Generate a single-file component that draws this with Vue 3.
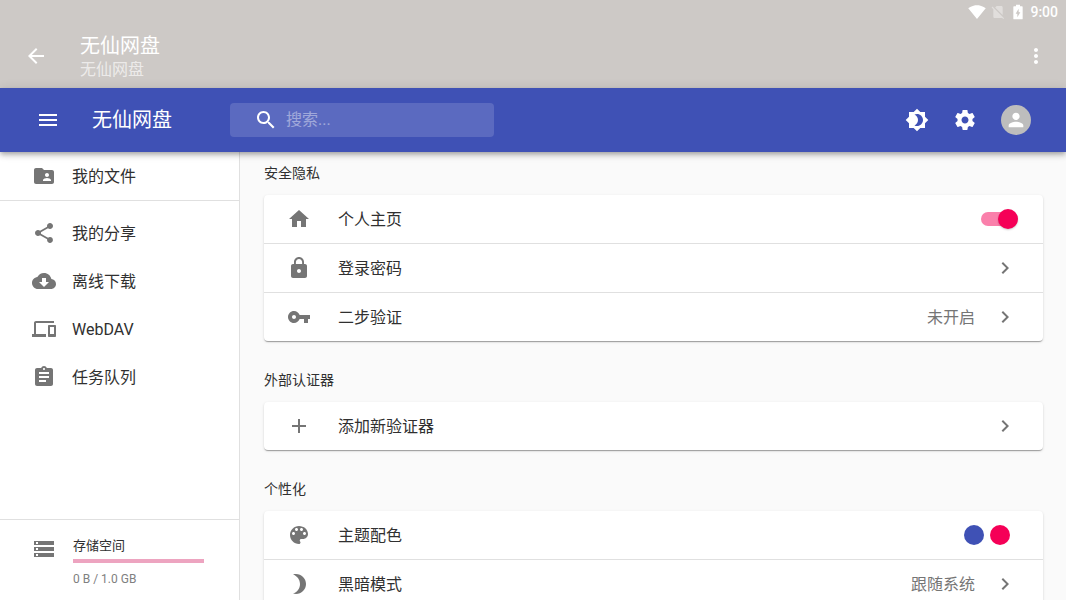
<script setup>
import { ref } from 'vue'

const query = ref('')
const homepage = ref(true)

const icons = {
  folder: 'M20 6h-8l-2-2H4c-1.1 0-1.99.9-1.99 2L2 18c0 1.1.9 2 2 2h16c1.1 0 2-.9 2-2V8c0-1.1-.9-2-2-2zm-5 3c1.1 0 2 .9 2 2s-.9 2-2 2-2-.9-2-2 .9-2 2-2zm4 8h-8v-1c0-1.33 2.67-2 4-2s4 .67 4 2v1z',
  share: 'M18 16.08c-.76 0-1.44.3-1.96.77L8.91 12.7c.05-.23.09-.46.09-.7s-.04-.47-.09-.7l7.05-4.11c.54.5 1.25.81 2.04.81 1.66 0 3-1.34 3-3s-1.34-3-3-3-3 1.34-3 3c0 .24.04.47.09.7L8.04 9.81C7.5 9.31 6.79 9 6 9c-1.66 0-3 1.34-3 3s1.34 3 3 3c.79 0 1.5-.31 2.04-.81l7.12 4.16c-.05.21-.08.43-.08.65 0 1.61 1.31 2.92 2.92 2.92s2.92-1.31 2.92-2.92-1.31-2.92-2.92-2.92z',
  cloud: 'M19.35 10.04C18.67 6.59 15.64 4 12 4 9.11 4 6.6 5.64 5.35 8.04 2.34 8.36 0 10.91 0 14c0 3.31 2.69 6 6 6h13c2.76 0 5-2.24 5-5 0-2.64-2.05-4.78-4.65-4.96zM17 13l-5 5-5-5h3V9h4v4h3z',
  devices: 'M4 6h18V4H4c-1.1 0-2 .9-2 2v11H0v3h14v-3H4V6zm19 2h-6c-.55 0-1 .45-1 1v10c0 .55.45 1 1 1h6c.55 0 1-.45 1-1V9c0-.55-.45-1-1-1zm-1 9h-4v-7h4v7z',
  tasks: 'M19 3h-4.18C14.4 1.84 13.3 1 12 1c-1.3 0-2.4.84-2.82 2H5c-1.1 0-2 .9-2 2v14c0 1.1.9 2 2 2h14c1.1 0 2-.9 2-2V5c0-1.1-.9-2-2-2zm-7 0c.55 0 1 .45 1 1s-.45 1-1 1-1-.45-1-1 .45-1 1-1zm2 14H7v-2h7v2zm3-4H7v-2h10v2zm0-4H7V7h10v2z',
  storage: 'M2 20h20v-4H2v4zm2-3h2v2H4v-2zM2 4v4h20V4H2zm4 3H4V5h2v2zm-4 7h20v-4H2v4zm2-3h2v2H4v-2z',
  home: 'M10 20v-6h4v6h5v-8h3L12 3 2 12h3v8z',
  lock: 'M18 8h-1V6c0-2.76-2.24-5-5-5S7 3.24 7 6v2H6c-1.1 0-2 .9-2 2v10c0 1.1.9 2 2 2h12c1.1 0 2-.9 2-2V10c0-1.1-.9-2-2-2zm-6 9c-1.1 0-2-.9-2-2s.9-2 2-2 2 .9 2 2-.9 2-2 2zm3.1-9H8.9V6c0-1.71 1.39-3.1 3.1-3.1 1.71 0 3.1 1.39 3.1 3.1v2z',
  key: 'M12.65 10C11.83 7.67 9.61 6 7 6c-3.31 0-6 2.69-6 6s2.69 6 6 6c2.61 0 4.83-1.67 5.65-4H17v4h4v-4h2v-4H12.65zM7 14c-1.1 0-2-.9-2-2s.9-2 2-2 2 .9 2 2-.9 2-2 2z',
  add: 'M19 13h-6v6h-2v-6H5v-2h6V5h2v6h6v2z',
  palette: 'M12 3c-4.97 0-9 4.03-9 9s4.03 9 9 9c.83 0 1.5-.67 1.5-1.5 0-.39-.15-.74-.39-1.01-.23-.26-.38-.61-.38-.99 0-.83.67-1.5 1.5-1.5H16c2.76 0 5-2.24 5-5 0-4.42-4.03-8-9-8zm-5.5 9c-.83 0-1.5-.67-1.5-1.5S5.67 9 6.5 9 8 9.67 8 10.5 7.33 12 6.5 12zm3-4C8.67 8 8 7.33 8 6.5S8.67 5 9.5 5s1.5.67 1.5 1.5S10.33 8 9.5 8zm5 0c-.83 0-1.5-.67-1.5-1.5S13.67 5 14.5 5s1.5.67 1.5 1.5S15.33 8 14.5 8zm3 4c-.83 0-1.5-.67-1.5-1.5S16.67 9 17.5 9s1.5.67 1.5 1.5-.67 1.5-1.5 1.5z',
  moon: 'M9 2c-1.05 0-2.05.16-3 .46 4.06 1.27 7 5.06 7 9.54 0 4.48-2.94 8.27-7 9.54.95.3 1.95.46 3 .46 5.52 0 10-4.48 10-10S14.52 2 9 2z',
  chevron: 'M10 6L8.59 7.41 13.17 12l-4.58 4.59L10 18l6-6z',
  back: 'M20 11H7.83l5.59-5.59L12 4l-8 8 8 8 1.41-1.41L7.83 13H20v-2z',
  more: 'M12 8c1.1 0 2-.9 2-2s-.9-2-2-2-2 .9-2 2 .9 2 2 2zm0 2c-1.1 0-2 .9-2 2s.9 2 2 2 2-.9 2-2-.9-2-2-2zm0 6c-1.1 0-2 .9-2 2s.9 2 2 2 2-.9 2-2-.9-2-2-2z',
  menu: 'M3 18h18v-2H3v2zm0-5h18v-2H3v2zm0-7v2h18V6H3z',
  search: 'M15.5 14h-.79l-.28-.27C15.41 12.59 16 11.11 16 9.5 16 5.91 13.09 3 9.5 3S3 5.91 3 9.5 5.91 16 9.5 16c1.61 0 3.09-.59 4.23-1.57l.27.28v.79l5 4.99L20.49 19l-4.99-5zm-6 0C7.01 14 5 11.99 5 9.5S7.01 5 9.5 5 14 7.01 14 9.5 11.99 14 9.5 14z',
  brightness: 'M20 8.69V4h-4.69L12 .69 8.69 4H4v4.69L.69 12 4 15.31V20h4.69L12 23.31 15.31 20H20v-4.69L23.31 12 20 8.69zM12 18c-.89 0-1.74-.2-2.5-.55C11.56 16.5 13 14.42 13 12s-1.44-4.5-3.5-5.45C10.26 6.2 11.11 6 12 6c3.31 0 6 2.69 6 6s-2.69 6-6 6z',
  settings: 'M19.43 12.98c.04-.32.07-.64.07-.98s-.03-.66-.07-.98l2.11-1.65c.19-.15.24-.42.12-.64l-2-3.46c-.12-.22-.39-.3-.61-.22l-2.49 1c-.52-.4-1.08-.73-1.69-.98l-.38-2.65C14.46 2.18 14.25 2 14 2h-4c-.25 0-.46.18-.49.42l-.38 2.65c-.61.25-1.17.59-1.69.98l-2.49-1c-.23-.09-.49 0-.61.22l-2 3.46c-.13.22-.07.49.12.64l2.11 1.65c-.04.32-.07.65-.07.98s.03.66.07.98l-2.11 1.65c-.19.15-.24.42-.12.64l2 3.46c.12.22.39.3.61.22l2.49-1c.52.4 1.08.73 1.69.98l.38 2.65c.03.24.24.42.49.42h4c.25 0 .46-.18.49-.42l.38-2.65c.61-.25 1.17-.59 1.69-.98l2.49 1c.23.09.49 0 .61-.22l2-3.46c.12-.22.07-.49-.12-.64l-2.11-1.65zM12 15.5c-1.93 0-3.5-1.57-3.5-3.5s1.57-3.5 3.5-3.5 3.5 1.57 3.5 3.5-1.57 3.5-3.5 3.5z',
  person: 'M12 12c2.21 0 4-1.79 4-4s-1.79-4-4-4-4 1.79-4 4 1.79 4 4 4zm0 2c-2.67 0-8 1.34-8 4v2h16v-2c0-2.66-5.33-4-8-4z',
  wifi: 'M12.01 21.49L23.64 7c-.45-.34-4.93-4-11.64-4C5.28 3 .81 6.66.36 7l11.63 14.49.01.01.01-.01z',
  nosim: 'M18.99 5c0-1.1-.89-2-1.99-2h-7L7.66 5.34 19 16.68 18.99 5zM3.65 3.88L2.38 5.15 5 7.77V19c0 1.1.9 2 2 2h10.01c.35 0 .67-.1.96-.26l1.88 1.88 1.27-1.27L3.65 3.88z',
  battery: 'M18 3.5h-3V1H9v2.5H6c-.6 0-1 .4-1 1V22c0 .6.4 1 1 1h12c.6 0 1-.4 1-1V4.5c0-.6-.4-1-1-1zM11 20v-5.5H8.5L13 7v5.5h2.5L11 20z',
}

const nav = [
  { label: '我的分享', icon: 'share' },
  { label: '离线下载', icon: 'cloud' },
  { label: 'WebDAV', icon: 'devices' },
  { label: '任务队列', icon: 'tasks' },
]

const sections = [
  {
    title: '安全隐私',
    rows: [
      { label: '个人主页', icon: 'home', kind: 'switch' },
      { label: '登录密码', icon: 'lock' },
      { label: '二步验证', icon: 'key', value: '未开启' },
    ],
  },
  { title: '外部认证器', rows: [{ label: '添加新验证器', icon: 'add' }] },
  {
    title: '个性化',
    rows: [
      { label: '主题配色', icon: 'palette', kind: 'colors' },
      { label: '黑暗模式', icon: 'moon', value: '跟随系统' },
    ],
  },
]
</script>

<template>
  <div class="app">
    <header class="system">
      <div class="status">
        <svg class="status-icon wifi" viewBox="0 0 24 24"><path :d="icons.wifi" /></svg>
        <svg class="status-icon faint" viewBox="0 0 24 24"><path :d="icons.nosim" /></svg>
        <svg class="status-icon" viewBox="0 0 24 24"><path :d="icons.battery" /></svg>
        <time class="clock">9:00</time>
      </div>
      <div class="titlebar">
        <button class="icon-btn" type="button" aria-label="返回">
          <svg class="icon" viewBox="0 0 24 24"><path :d="icons.back" /></svg>
        </button>
        <div class="titles">
          <div class="title">无仙网盘</div>
          <div class="subtitle">无仙网盘</div>
        </div>
        <button class="icon-btn" type="button" aria-label="更多">
          <svg class="icon" viewBox="0 0 24 24"><path :d="icons.more" /></svg>
        </button>
      </div>
    </header>

    <header class="appbar">
      <button class="icon-btn" type="button" aria-label="菜单">
        <svg class="icon" viewBox="0 0 24 24"><path :d="icons.menu" /></svg>
      </button>
      <h1 class="brand">无仙网盘</h1>
      <label class="search">
        <svg class="icon" viewBox="0 0 24 24"><path :d="icons.search" /></svg>
        <input v-model="query" type="text" placeholder="搜索..." aria-label="搜索" />
      </label>
      <div class="actions">
        <button class="icon-btn" type="button" aria-label="切换主题">
          <svg class="icon" viewBox="0 0 24 24"><path :d="icons.brightness" /></svg>
        </button>
        <button class="icon-btn" type="button" aria-label="设置">
          <svg class="icon" viewBox="0 0 24 24"><path :d="icons.settings" /></svg>
        </button>
        <button class="avatar" type="button" aria-label="账户">
          <svg viewBox="0 0 24 24"><path :d="icons.person" /></svg>
        </button>
      </div>
    </header>

    <div class="body">
      <aside class="sidebar">
        <nav>
          <div class="nav-top">
            <a class="nav-item" href="#">
              <svg class="icon" viewBox="0 0 24 24"><path :d="icons.folder" /></svg>
              <span>我的文件</span>
            </a>
          </div>
          <div class="nav-list">
            <a v-for="item in nav" :key="item.label" class="nav-item" href="#">
              <svg class="icon" viewBox="0 0 24 24"><path :d="icons[item.icon]" /></svg>
              <span>{{ item.label }}</span>
            </a>
          </div>
        </nav>
        <div class="storage">
          <svg class="icon" viewBox="0 0 24 24"><path :d="icons.storage" /></svg>
          <div class="storage-info">
            <div class="storage-title">存储空间</div>
            <div class="bar" role="progressbar" aria-label="存储空间" aria-valuenow="0"></div>
            <div class="storage-text">0 B / 1.0 GB</div>
          </div>
        </div>
      </aside>

      <main class="content">
        <section v-for="section in sections" :key="section.title" class="section">
          <h2>{{ section.title }}</h2>
          <div class="card">
            <template v-for="row in section.rows" :key="row.label">
              <label v-if="row.kind === 'switch'" class="row">
                <svg class="icon" viewBox="0 0 24 24"><path :d="icons[row.icon]" /></svg>
                <span class="label">{{ row.label }}</span>
                <input v-model="homepage" class="switch" type="checkbox" role="switch" />
              </label>
              <button v-else class="row" type="button">
                <svg class="icon" viewBox="0 0 24 24"><path :d="icons[row.icon]" /></svg>
                <span class="label">{{ row.label }}</span>
                <span v-if="row.kind === 'colors'" class="swatches">
                  <i class="dot primary"></i><i class="dot secondary"></i>
                </span>
                <template v-else>
                  <span v-if="row.value" class="value">{{ row.value }}</span>
                  <svg class="icon chevron" viewBox="0 0 24 24"><path :d="icons.chevron" /></svg>
                </template>
              </button>
            </template>
          </div>
        </section>
      </main>
    </div>
  </div>
</template>

<style>
body {
  margin: 0;
  overflow: hidden;
}
</style>

<style scoped>
* {
  box-sizing: border-box;
}
.app {
  display: flex;
  flex-direction: column;
  height: 100vh;
  overflow: hidden;
  background: #fafafa;
  color: #303030;
  font: 16px/24px Roboto, "Noto Sans CJK SC", sans-serif;
}
button,
input {
  font: inherit;
  color: inherit;
}
button {
  border: 0;
  padding: 0;
  background: none;
  cursor: pointer;
}
svg {
  fill: currentColor;
}
.icon {
  display: block;
  flex: none;
  width: 24px;
  height: 24px;
}
.icon-btn {
  display: flex;
  align-items: center;
  justify-content: center;
  flex: none;
  width: 48px;
  height: 48px;
}

.system {
  flex: none;
  background: #cdc9c6;
  color: #fff;
}
.status {
  display: flex;
  align-items: center;
  justify-content: flex-end;
  gap: 4px;
  height: 24px;
  padding-right: 8px;
}
.status-icon {
  width: 16px;
  height: 16px;
}
.status-icon.wifi {
  width: 18px;
  height: 18px;
}
.faint {
  opacity: 0.4;
}
.clock {
  font-size: 14px;
  font-weight: 500;
}
.titlebar {
  display: flex;
  align-items: center;
  height: 64px;
  padding: 0 6px 0 12px;
}
.titles {
  flex: 1;
  padding: 4px 0 0 20px;
}
.title {
  font-size: 20px;
  line-height: 24px;
}
.subtitle {
  color: rgba(255, 255, 255, 0.65);
}

.appbar {
  position: relative;
  z-index: 1;
  display: flex;
  align-items: center;
  flex: none;
  height: 64px;
  padding: 0 31px 0 24px;
  background: #3f51b5;
  color: #fff;
  box-shadow: 0 2px 4px -1px rgba(0, 0, 0, 0.2), 0 4px 5px rgba(0, 0, 0, 0.14),
    0 1px 10px rgba(0, 0, 0, 0.12);
}
.brand {
  margin: 0;
  padding-left: 20px;
  width: 158px;
  font-size: 20px;
  font-weight: 400;
  line-height: 32px;
}
.search {
  display: flex;
  align-items: center;
  gap: 8px;
  width: 264px;
  height: 34px;
  padding: 0 8px 0 24px;
  border-radius: 4px;
  background: rgba(255, 255, 255, 0.15);
}
.search input {
  flex: 1;
  min-width: 0;
  padding: 0;
  border: 0;
  outline: 0;
  background: none;
}
.search input::placeholder {
  color: #fff;
  opacity: 0.42;
}
.actions {
  display: flex;
  align-items: center;
  margin-left: auto;
}
.avatar {
  display: flex;
  align-items: center;
  justify-content: center;
  width: 30px;
  height: 30px;
  margin-left: 12px;
  margin-right: 4px;
  border-radius: 50%;
  background: #bdbdbd;
}
.avatar svg {
  width: 22px;
  height: 22px;
}

.body {
  display: flex;
  flex: 1;
  min-height: 0;
}
.sidebar {
  display: flex;
  flex-direction: column;
  justify-content: space-between;
  flex: none;
  width: 240px;
  border-right: 1px solid #e0e0e0;
  background: #fff;
}
.nav-top {
  border-bottom: 1px solid #e0e0e0;
}
.nav-list {
  padding: 8px 0;
}
.nav-item {
  display: flex;
  align-items: center;
  gap: 16px;
  height: 48px;
  padding: 0 32px;
  color: inherit;
  text-decoration: none;
}
.nav-item span,
.label,
.value {
  padding-top: 2px;
}
.nav-item .icon,
.storage .icon,
.row .icon {
  color: #757575;
}
.storage {
  display: flex;
  align-items: flex-start;
  gap: 17px;
  padding: 17px 35px 12px 32px;
  border-top: 1px solid #e0e0e0;
}
.storage-info {
  flex: 1;
}
.storage-title {
  font-size: 13px;
  line-height: 18px;
}
.bar {
  height: 4px;
  margin: 4px 0 7px;
  background: #eda4c0;
}
.storage-text {
  color: #808080;
  font-size: 12px;
  line-height: 18px;
}

.content {
  flex: 1;
  min-width: 0;
  padding: 11px 23px 0 24px;
  overflow: hidden;
}
.section {
  margin-bottom: 29px;
}
h2 {
  margin: 0 0 12px;
  font-size: 14px;
  font-weight: 400;
  line-height: 20px;
}
.card {
  border-radius: 4px;
  background: #fff;
  box-shadow: 0 2px 1px -1px rgba(0, 0, 0, 0.2), 0 1px 1px rgba(0, 0, 0, 0.14),
    0 1px 3px rgba(0, 0, 0, 0.12);
}
.row {
  display: flex;
  align-items: center;
  width: 100%;
  height: 48px;
  padding: 0 24px 0 23px;
  text-align: left;
  cursor: pointer;
}
.row + .row {
  height: 49px;
  border-top: 1px solid #e0e0e0;
}
.label {
  flex: 1;
  padding-left: 27px;
}
.value {
  margin-right: 18px;
  color: #757575;
}
.chevron {
  margin-right: 2px;
}
.swatches {
  display: flex;
  gap: 6px;
  margin-right: 9px;
}
.dot {
  width: 20px;
  height: 20px;
  border-radius: 50%;
}
.primary {
  background: #3f51b5;
}
.secondary {
  background: #f50057;
}
.switch {
  position: relative;
  appearance: none;
  width: 34px;
  height: 14px;
  margin: 0 4px 0 0;
  border-radius: 7px;
  background: #9e9e9e;
  cursor: pointer;
}
.switch::before {
  content: "";
  position: absolute;
  top: -3px;
  left: -3px;
  width: 20px;
  height: 20px;
  border-radius: 50%;
  background: #fafafa;
  box-shadow: 0 1px 2px rgba(0, 0, 0, 0.2);
}
.switch:checked {
  background: #fa80ab;
}
.switch:checked::before {
  left: 17px;
  background: #f50057;
}
</style>
